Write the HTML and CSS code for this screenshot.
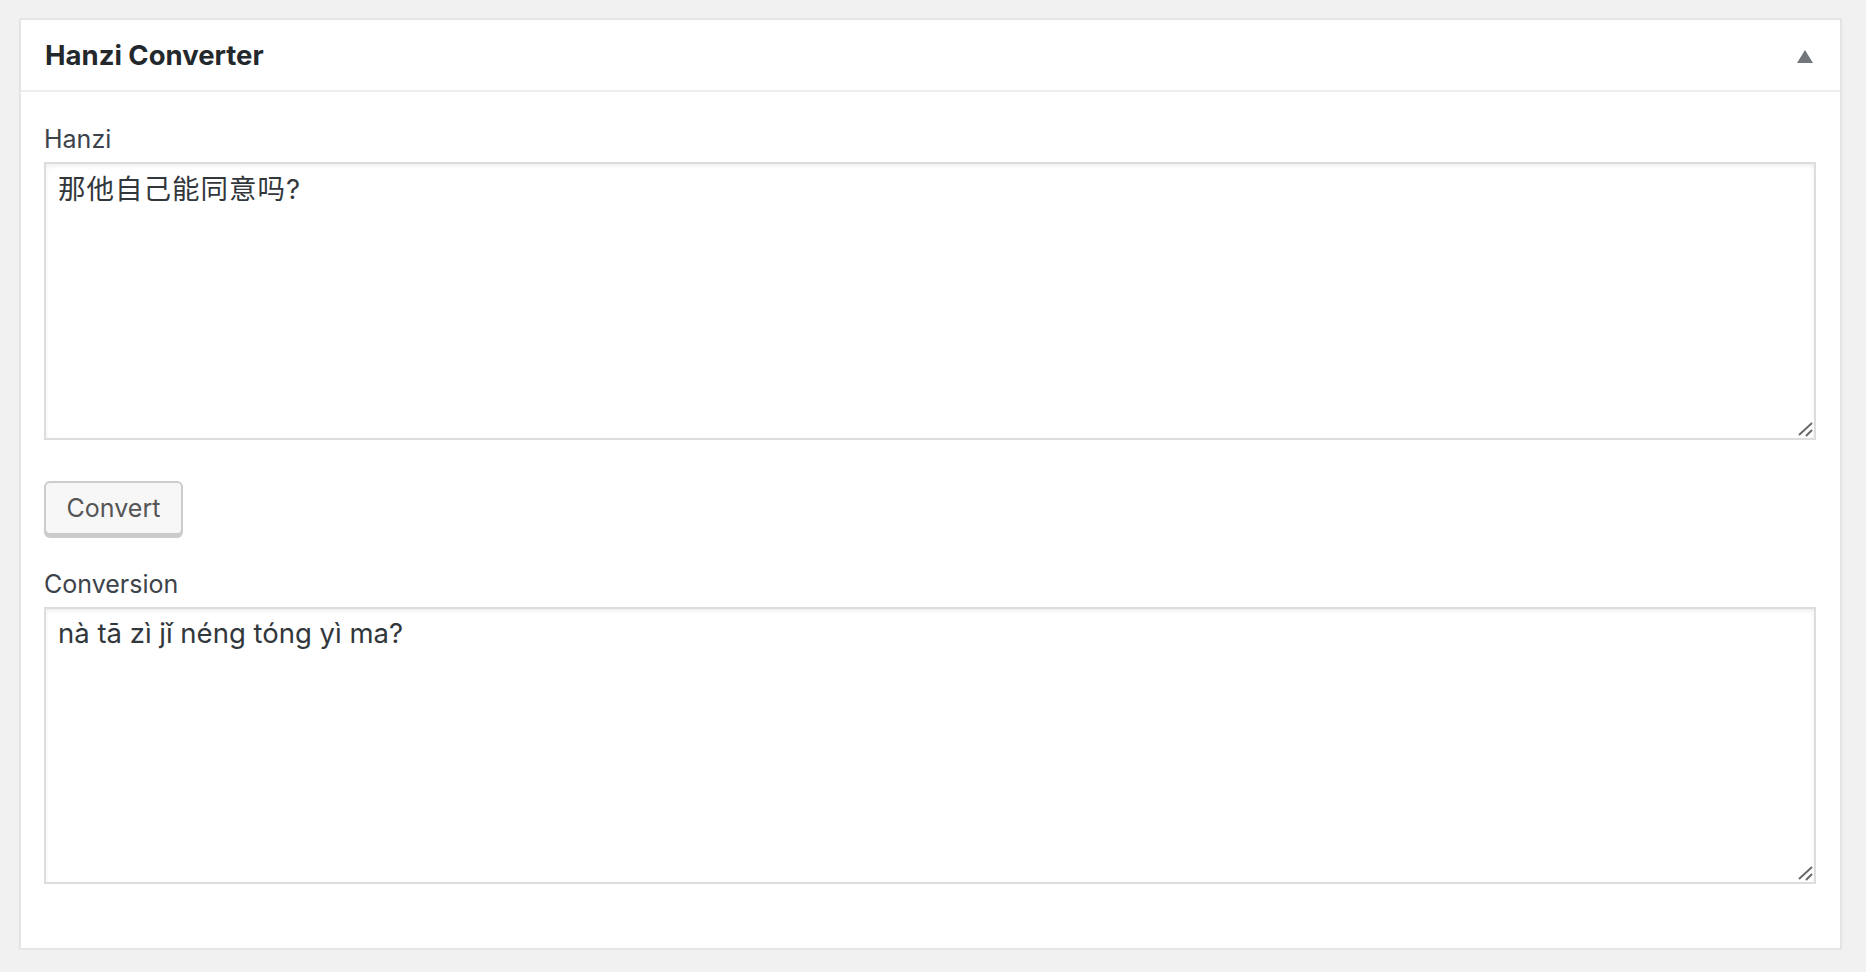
FILE: index.html
```html
<!DOCTYPE html>
<html lang="en">
<head>
<meta charset="utf-8">
<title>Hanzi Converter</title>
<link rel="stylesheet" href="styles.css">
</head>
<body>
<div class="postbox">
  <div class="postbox-header">
    <h2 class="postbox-title">Hanzi Converter</h2>
    <span class="toggle-indicator" aria-hidden="true"></span>
  </div>
  <div class="inside">
    <label class="field-label" for="hanzi">Hanzi</label>
    <div class="field-wrap">
      <textarea id="hanzi" class="field-text hanzi-text">那他自己能同意吗?</textarea>
      <svg class="resizer" width="16" height="16" viewBox="0 0 16 16" aria-hidden="true"><path d="M2 14 L15 2 M9 15 L15 9" stroke="#6a6a6a" stroke-width="2" stroke-linecap="butt" fill="none"/></svg>
    </div>
    <button class="button" type="button">Convert</button>
    <label class="field-label conv-label" for="conversion">Conversion</label>
    <div class="field-wrap">
      <textarea id="conversion" class="field-text conv-text">nà tā zì jǐ néng tóng yì ma?</textarea>
      <svg class="resizer" width="16" height="16" viewBox="0 0 16 16" aria-hidden="true"><path d="M2 14 L15 2 M9 15 L15 9" stroke="#6a6a6a" stroke-width="2" stroke-linecap="butt" fill="none"/></svg>
    </div>
  </div>
</div>
</body>
</html>
```
FILE: styles.css
```css
html, body {
  margin: 0;
  padding: 0;
}
body {
  background: #f1f1f1;
  padding: 18px 24px 0 19px;
  font-family: Inter, "Noto Sans CJK SC", sans-serif;
  color: #444;
}
.postbox {
  background: #fff;
  border: 2px solid #e5e5e5;
  box-shadow: 0 2px 2px rgba(0, 0, 0, 0.04);
}
.postbox-header {
  height: 70px;
  border-bottom: 2px solid #eee;
  display: flex;
  align-items: center;
  justify-content: space-between;
  padding: 0 27px 0 24px;
}
.postbox-title {
  margin: 0;
  font-size: 27.5px;
  font-weight: 700;
  color: #23282d;
}
.toggle-indicator {
  width: 0;
  height: 0;
  border-left: 8px solid transparent;
  border-right: 8px solid transparent;
  border-bottom: 13px solid #72777c;
  margin-top: 3px;
}
.inside {
  padding: 30px 24px 64px 23px;
  display: flex;
  flex-direction: column;
  align-items: flex-start;
}
.field-label {
  display: block;
  font-size: 25px;
  line-height: 34px;
  color: #3c434a;
  margin-bottom: 6px;
}
.conv-label {
  margin-top: 32px;
}
.field-wrap {
  position: relative;
  width: 100%;
}
.field-text {
  display: block;
  box-sizing: border-box;
  width: 100%;
  height: 278px;
  margin: 0;
  border: 2px solid #ddd;
  border-radius: 0;
  box-shadow: inset 0 2px 4px rgba(0, 0, 0, 0.07);
  padding: 6px 12px;
  font-family: Inter, "Noto Sans CJK SC", sans-serif;
  font-size: 27.5px;
  line-height: 1.45;
  color: #32373c;
  background: #fff;
  resize: none;
  outline: none;
}
.hanzi-text {
  letter-spacing: 1px;
}
.conv-text {
  height: 277px;
  padding-top: 5px;
}
.resizer {
  position: absolute;
  right: 3px;
  bottom: 3px;
  pointer-events: none;
}
.button {
  margin-top: 41px;
  height: 54px;
  padding: 0 18px;
  box-sizing: border-box;
  width: 139px;
  background: #f7f7f7;
  border: 2px solid #ccc;
  border-radius: 6px;
  box-shadow: 0 3px 0 #ccc;
  font-family: Inter, sans-serif;
  font-size: 25px;
  color: #555;
  cursor: pointer;
}
```
